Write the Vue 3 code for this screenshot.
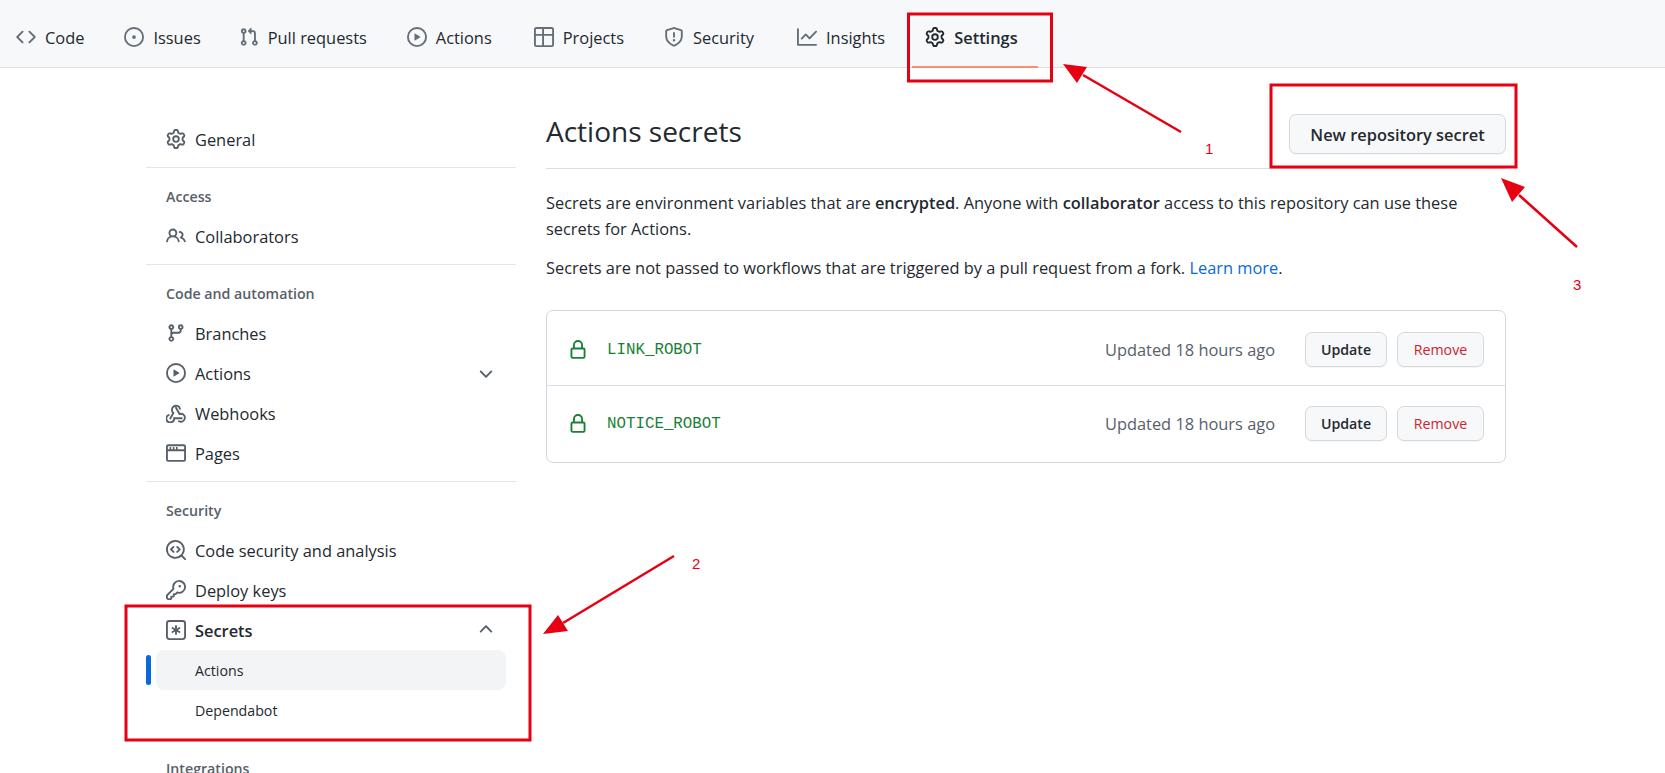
<script setup>
const icons = {
  code: 'M4.72 3.22a.75.75 0 011.06 1.06L2.06 8l3.72 3.72a.75.75 0 11-1.06 1.06L.47 8.53a.75.75 0 010-1.06l4.25-4.25zm6.56 0a.75.75 0 10-1.06 1.06L13.94 8l-3.72 3.72a.75.75 0 101.06 1.06l4.25-4.25a.75.75 0 000-1.06l-4.25-4.25z',
  issue: 'M8 9.5a1.5 1.5 0 100-3 1.5 1.5 0 000 3zM8 0a8 8 0 100 16A8 8 0 008 0zM1.5 8a6.5 6.5 0 1113 0 6.5 6.5 0 01-13 0z',
  pull: 'M7.177 3.073L9.573.677A.25.25 0 0110 .854v4.792a.25.25 0 01-.427.177L7.177 3.427a.25.25 0 010-.354zM3.75 2.5a.75.75 0 100 1.5.75.75 0 000-1.5zm-2.25.75a2.25 2.25 0 113 2.122v5.256a2.251 2.251 0 11-1.5 0V5.372A2.25 2.25 0 011.5 3.25zM11 2.5h-1V4h1a1 1 0 011 1v5.628a2.251 2.251 0 101.5 0V5A2.5 2.5 0 0011 2.5zm1 10.25a.75.75 0 111.5 0 .75.75 0 01-1.5 0zM3.75 12a.75.75 0 100 1.5.75.75 0 000-1.5z',
  play: 'M1.5 8a6.5 6.5 0 1113 0 6.5 6.5 0 01-13 0zM8 0a8 8 0 100 16A8 8 0 008 0zM6.379 5.227A.25.25 0 006 5.442v5.117a.25.25 0 00.379.214l4.264-2.559a.25.25 0 000-.428L6.379 5.227z',
  table: 'M0 1.75C0 .784.784 0 1.75 0h12.5C15.216 0 16 .784 16 1.75v12.5A1.75 1.75 0 0114.25 16H1.75A1.75 1.75 0 010 14.25V1.75zM1.5 1.5h5v4h-5zM8 1.5h6.5v4H8zM1.5 7h5v7.5h-5zM8 7h6.5v7.5H8z',
  shield: 'M7.467.133a1.75 1.75 0 011.066 0l5.25 1.68A1.75 1.75 0 0115 3.48V7c0 1.566-.32 3.182-1.303 4.682-.983 1.498-2.585 2.813-5.032 3.855a1.7 1.7 0 01-1.33 0c-2.447-1.042-4.049-2.357-5.032-3.855C1.32 10.182 1 8.566 1 7V3.48a1.75 1.75 0 011.217-1.667l5.25-1.68zm.61 1.429a.25.25 0 00-.153 0l-5.25 1.68a.25.25 0 00-.174.238V7c0 1.358.275 2.666 1.057 3.86.784 1.194 2.121 2.34 4.366 3.297a.2.2 0 00.154 0c2.245-.956 3.582-2.104 4.366-3.298C13.225 9.666 13.5 8.36 13.5 7V3.48a.25.25 0 00-.174-.237l-5.25-1.68zM9 10.5a1 1 0 11-2 0 1 1 0 012 0zm-.25-5.75a.75.75 0 10-1.5 0v3a.75.75 0 001.5 0v-3z',
  graph: 'M1.5 1.75a.75.75 0 00-1.5 0v12.5c0 .414.336.75.75.75h14.5a.75.75 0 000-1.5H1.5V1.75zm14.28 2.53a.75.75 0 00-1.06-1.06L10 7.94 7.53 5.47a.75.75 0 00-1.06 0L3.22 8.72a.75.75 0 001.06 1.06L7 7.06l2.47 2.47a.75.75 0 001.06 0l5.25-5.25z',
  gear: 'M7.429 1.525a6.593 6.593 0 011.142 0c.036.003.108.036.137.146l.289 1.105c.147.56.55.967.997 1.189.174.086.341.183.501.29.417.278.97.423 1.53.27l1.102-.303c.11-.03.175.016.195.046.219.31.41.641.573.989.014.031.022.11-.059.19l-.815.806c-.411.406-.562.957-.53 1.456a4.588 4.588 0 010 .582c-.032.499.119 1.05.53 1.456l.815.806c.08.08.073.159.059.19a6.494 6.494 0 01-.573.99c-.02.029-.086.074-.195.045l-1.103-.303c-.559-.153-1.112-.008-1.529.27-.16.107-.327.204-.5.29-.449.222-.851.628-.998 1.189l-.289 1.105c-.029.11-.101.143-.137.146a6.613 6.613 0 01-1.142 0c-.036-.003-.108-.037-.137-.146l-.289-1.105c-.147-.56-.55-.967-.997-1.189a4.502 4.502 0 01-.501-.29c-.417-.278-.97-.423-1.53-.27l-1.102.303c-.11.03-.175-.016-.195-.046a6.492 6.492 0 01-.573-.989c-.014-.031-.022-.11.059-.19l.815-.806c.411-.406.562-.957.53-1.456a4.587 4.587 0 010-.582c.032-.499-.119-1.05-.53-1.456l-.815-.806c-.08-.08-.073-.159-.059-.19a6.44 6.44 0 01.573-.99c.02-.029.086-.075.195-.045l1.103.303c.559.153 1.112.008 1.529-.27.16-.107.327-.204.5-.29.449-.222.851-.628.998-1.189l.289-1.105c.029-.11.101-.143.137-.146zM8 0c-.236 0-.47.01-.701.03-.743.065-1.29.615-1.458 1.261l-.29 1.106c-.017.066-.078.158-.211.224a5.994 5.994 0 00-.668.386c-.123.082-.233.09-.3.071L3.27 2.776c-.644-.177-1.392.02-1.82.63a7.977 7.977 0 00-.704 1.217c-.315.675-.111 1.422.363 1.891l.815.806c.05.048.098.147.088.294a6.084 6.084 0 000 .772c.01.147-.038.246-.088.294l-.815.806c-.474.469-.678 1.216-.363 1.891.2.428.436.835.704 1.218.428.609 1.176.806 1.82.63l1.103-.303c.066-.019.176-.011.299.071.213.143.436.272.668.386.133.066.194.158.212.224l.289 1.106c.169.646.715 1.196 1.458 1.26a8.094 8.094 0 001.402 0c.743-.064 1.29-.614 1.458-1.26l.29-1.106c.017-.066.078-.158.211-.224a5.98 5.98 0 00.668-.386c.123-.082.233-.09.3-.071l1.102.302c.644.177 1.392-.02 1.82-.63.268-.382.505-.789.704-1.217.315-.675.111-1.422-.364-1.891l-.814-.806c-.05-.048-.098-.147-.088-.294a6.1 6.1 0 000-.772c-.01-.147.039-.246.088-.294l.814-.806c.475-.469.679-1.216.364-1.891a7.992 7.992 0 00-.704-1.218c-.428-.609-1.176-.806-1.82-.63l-1.103.303c-.066.019-.176.011-.299-.071a5.991 5.991 0 00-.668-.386c-.133-.066-.194-.158-.212-.224L10.16 1.29C9.99.645 9.444.095 8.701.031A8.094 8.094 0 008 0zm1.5 8a1.5 1.5 0 11-3 0 1.5 1.5 0 013 0zM11 8a3 3 0 11-6 0 3 3 0 016 0z',
  people: 'M5.5 3.5a2 2 0 100 4 2 2 0 000-4zM2 5.5a3.5 3.5 0 115.898 2.549 5.507 5.507 0 013.034 4.084.75.75 0 11-1.482.235 4.001 4.001 0 00-7.9 0 .75.75 0 01-1.482-.236A5.507 5.507 0 013.102 8.05 3.49 3.49 0 012 5.5zM11 4a.75.75 0 100 1.5 1.5 1.5 0 01.666 2.844.75.75 0 00-.416.672v.352a.75.75 0 00.574.73c1.2.289 2.162 1.2 2.522 2.372a.75.75 0 101.434-.44 5.01 5.01 0 00-2.56-3.012A3 3 0 0011 4z',
  branch: 'M11.75 2.5a.75.75 0 100 1.5.75.75 0 000-1.5zm-2.25.75a2.25 2.25 0 113 2.122V6A2.5 2.5 0 0110 8.5H6a1 1 0 00-1 1v1.128a2.251 2.251 0 11-1.5 0V5.372a2.25 2.25 0 111.5 0v1.836A2.492 2.492 0 016 7h4a1 1 0 001-1v-.628A2.25 2.25 0 019.5 3.25zM4.25 12a.75.75 0 100 1.5.75.75 0 000-1.5zM3.5 3.25a.75.75 0 111.5 0 .75.75 0 01-1.5 0z',
  browser: 'M0 2.75C0 1.784.784 1 1.75 1h12.5c.966 0 1.75.784 1.75 1.75v10.5A1.75 1.75 0 0114.25 15H1.75A1.75 1.75 0 010 13.25V2.75zM1.5 6.5v6.75c0 .138.112.25.25.25h12.5a.25.25 0 00.25-.25V6.5zM1.5 5h1.3V3.2h1.3V5h1.3V3.2h1.3V5h1.3V3.2h1.3V5h5.2V2.75a.25.25 0 00-.25-.25H1.75a.25.25 0 00-.25.25z',
  codescan: 'M8.47 4.97a.75.75 0 000 1.06L9.94 7.5 8.47 8.97a.75.75 0 101.06 1.06l2-2a.75.75 0 000-1.06l-2-2a.75.75 0 00-1.06 0zM6.53 6.03a.75.75 0 00-1.06-1.06l-2 2a.75.75 0 000 1.06l2 2a.75.75 0 101.06-1.06L5.06 7.5l1.47-1.47zM12.246 13.307a7.5 7.5 0 111.06-1.06l2.474 2.473a.75.75 0 11-1.06 1.06l-2.474-2.473zM1.5 7.5a6 6 0 1110.386 4.094.75.75 0 00-.292.293A6 6 0 011.5 7.5z',
  key: 'M6.5 5.5a4 4 0 112.731 3.795.75.75 0 00-.768.18L7.44 10.5H6.25a.75.75 0 00-.75.75v1.19l-.06.06H4.25a.75.75 0 00-.75.75v1.19l-.06.06H1.75a.25.25 0 01-.25-.25v-1.69l5.024-5.023a.75.75 0 00.181-.768A3.995 3.995 0 016.5 5.5zm4-5.5a5.5 5.5 0 00-5.348 6.788L.22 11.72a.75.75 0 00-.22.53v2C0 15.216.784 16 1.75 16h2a.75.75 0 00.53-.22l.5-.5a.75.75 0 00.22-.53V14h.75a.75.75 0 00.53-.22l.5-.5a.75.75 0 00.22-.53V12h.75a.75.75 0 00.53-.22l.932-.932A5.5 5.5 0 1010.5 0zm.5 6a1 1 0 100-2 1 1 0 000 2z',
  asterisk: 'M0 2.75A2.75 2.75 0 012.75 0h10.5A2.75 2.75 0 0116 2.75v10.5A2.75 2.75 0 0113.25 16H2.75A2.75 2.75 0 010 13.25V2.75zm2.75-1.25c-.69 0-1.25.56-1.25 1.25v10.5c0 .69.56 1.25 1.25 1.25h10.5c.69 0 1.25-.56 1.25-1.25V2.75c0-.69-.56-1.25-1.25-1.25H2.75zM8 4a.75.75 0 01.75.75V6.7l1.69-.975a.75.75 0 01.75 1.3L9.5 8l1.69.976a.75.75 0 01-.75 1.298L8.75 9.3v1.951a.75.75 0 01-1.5 0V9.299l-1.69.976a.75.75 0 01-.75-1.3L6.5 8l-1.69-.975a.75.75 0 01.75-1.3l1.69.976V4.75A.75.75 0 018 4z',
  lock: 'M4 4v2h-.25A1.75 1.75 0 002 7.75v5.5c0 .966.784 1.75 1.75 1.75h8.5A1.75 1.75 0 0014 13.25v-5.5A1.75 1.75 0 0012.25 6H12V4a4 4 0 10-8 0zm6.5 2V4a2.5 2.5 0 00-5 0v2h5zM12 7.5h.25a.25.25 0 01.25.25v5.5a.25.25 0 01-.25.25h-8.5a.25.25 0 01-.25-.25v-5.5a.25.25 0 01.25-.25H12z',
  down: 'M12.78 6.22a.75.75 0 010 1.06l-4.25 4.25a.75.75 0 01-1.06 0L3.22 7.28a.75.75 0 011.06-1.06L8 9.94l3.72-3.72a.75.75 0 011.06 0z',
  up: 'M3.22 9.78a.75.75 0 010-1.06l4.25-4.25a.75.75 0 011.06 0l4.25 4.25a.75.75 0 01-1.06 1.06L8 6.06 4.28 9.78a.75.75 0 01-1.06 0z',
}

const tabs = [
  { label: 'Code', icon: 'code' },
  { label: 'Issues', icon: 'issue' },
  { label: 'Pull requests', icon: 'pull' },
  { label: 'Actions', icon: 'play' },
  { label: 'Projects', icon: 'table' },
  { label: 'Security', icon: 'shield' },
  { label: 'Insights', icon: 'graph' },
  { label: 'Settings', icon: 'gear', active: true },
]

const secrets = ['LINK_ROBOT', 'NOTICE_ROBOT']
</script>

<template>
  <div class="page">
    <nav class="tabs">
      <a v-for="tab in tabs" :key="tab.label" class="tab" :class="{ active: tab.active }">
        <svg class="icon" viewBox="0 0 16 16"><path :d="icons[tab.icon]" /></svg>
        <span>{{ tab.label }}</span>
      </a>
    </nav>

    <div class="layout">
      <aside class="side">
        <a class="row"><svg class="icon" viewBox="0 0 16 16"><path :d="icons.gear" /></svg>General</a>
        <hr />
        <div class="label">Access</div>
        <a class="row"><svg class="icon" viewBox="0 0 16 16"><path :d="icons.people" /></svg>Collaborators</a>
        <hr />
        <div class="label">Code and automation</div>
        <a class="row"><svg class="icon" viewBox="0 0 16 16"><path :d="icons.branch" /></svg>Branches</a>
        <a class="row">
          <svg class="icon" viewBox="0 0 16 16"><path :d="icons.play" /></svg>Actions
          <svg class="chev" viewBox="0 0 16 16"><path :d="icons.down" /></svg>
        </a>
        <a class="row">
          <svg class="icon" viewBox="0 0 16 16">
            <g class="hook">
              <path d="M3.4 12.4 L5.9 8 A3.3 3.3 0 1 1 11.2 4.6" />
              <path d="M8 3.8 L10.8 8.8 A3.2 3.2 0 1 1 10.4 14.6" />
              <path d="M12.6 12.2 H6.5 A3.1 3.1 0 1 1 2.2 9.6" />
            </g>
          </svg>Webhooks
        </a>
        <a class="row"><svg class="icon" viewBox="0 0 16 16"><path :d="icons.browser" /></svg>Pages</a>
        <hr />
        <div class="label">Security</div>
        <a class="row"><svg class="icon" viewBox="0 0 16 16"><path :d="icons.codescan" /></svg>Code security and analysis</a>
        <a class="row"><svg class="icon" viewBox="0 0 16 16"><path :d="icons.key" /></svg>Deploy keys</a>
        <a class="row strong">
          <svg class="icon" viewBox="0 0 16 16"><path :d="icons.asterisk" /></svg>Secrets
          <svg class="chev" viewBox="0 0 16 16"><path :d="icons.up" /></svg>
        </a>
        <a class="sub current">Actions</a>
        <a class="sub">Dependabot</a>
        <div class="label last">Integrations</div>
      </aside>

      <main class="main">
        <header class="head">
          <h2>Actions secrets</h2>
          <button class="btn big">New repository secret</button>
        </header>
        <p class="first">
          Secrets are environment variables that are <b>encrypted</b>. Anyone with <b>collaborator</b> access to this repository can use these secrets for Actions.
        </p>
        <p class="second">
          Secrets are not passed to workflows that are triggered by a pull request from a fork. <a class="link">Learn more</a>.
        </p>
        <div class="box">
          <div v-for="name in secrets" :key="name" class="secret">
            <svg class="lock" viewBox="0 0 16 16"><path :d="icons.lock" /></svg>
            <code>{{ name }}</code>
            <span class="when">Updated 18 hours ago</span>
            <button class="btn small">Update</button>
            <button class="btn small danger">Remove</button>
          </div>
        </div>
      </main>
    </div>

    <!-- red annotations drawn on top of the screenshot -->
    <svg class="marks" width="1665" height="773" viewBox="0 0 1665 773">
      <g fill="none" stroke="#e60012" stroke-width="3">
        <rect x="908.5" y="14" width="143" height="67" />
        <rect x="1271" y="85" width="245" height="82" />
        <rect x="126" y="606" width="404" height="134" />
        <path d="M1181 132 L1083 75" stroke-width="2.5" />
        <path d="M1577 247 L1519 195" stroke-width="2.5" />
        <path d="M674 556 L563 623" stroke-width="2.5" />
      </g>
      <g fill="#e60012">
        <path d="M1063 64 L1087 67 L1077 83 Z" />
        <path d="M1501 178 L1525 187 L1512 202 Z" />
        <path d="M543 634 L558 615 L568 631 Z" />
      </g>
      <g class="num" fill="#e60012">
        <text x="1205" y="154">1</text>
        <text x="692" y="569">2</text>
        <text x="1573" y="290">3</text>
      </g>
    </svg>
  </div>
</template>

<style>
html, body {
  margin: 0;
  height: 773px;
  overflow: hidden;
  background: #fff;
}
</style>

<style scoped>
.page {
  position: relative;
  height: 773px;
  overflow: hidden;
  font-family: "Open Sans", "Liberation Sans", sans-serif;
  font-size: 16.4px;
  color: #24292f;
}

.tabs {
  display: flex;
  height: 67px;
  padding-left: 16px;
  gap: 40px;
  background: #f6f8fa;
  border-bottom: 1px solid #d8dee4;
}

.tab {
  position: relative;
  display: flex;
  align-items: center;
  gap: 9px;
  padding-top: 7px;
}

.tab:nth-child(3) {
  margin-left: -2px;
}

.tab:nth-child(5) {
  margin-left: 2px;
}

.tab:nth-child(7) {
  margin-left: 3px;
}

.tab .icon {
  fill: #656d76;
  margin-top: -1px;
}

.tab.active {
  font-weight: 600;
}

.tab.active .icon {
  fill: #24292f;
}

.tab.active::after {
  content: "";
  position: absolute;
  left: -13px;
  right: -20px;
  bottom: -1px;
  height: 2px;
  background: #fd8c73;
}

.icon {
  width: 20px;
  height: 20px;
  flex: none;
  fill: #57606a;
  fill-rule: evenodd;
}

.layout {
  display: flex;
  padding: 51px 0 0 146px;
}

.side {
  width: 370px;
  flex: none;
}

.row {
  display: flex;
  align-items: center;
  gap: 9px;
  height: 40px;
  padding-left: 20px;
}

.row.strong {
  font-weight: 600;
}

.chev {
  width: 20px;
  height: 20px;
  margin-left: auto;
  margin-right: 20px;
  fill: #57606a;
}

.hook {
  fill: none;
  stroke: #57606a;
  stroke-width: 1.5;
  stroke-linecap: round;
}

hr {
  margin: 8px 0 0;
  border: 0;
  height: 1px;
  background: #e2e6ea;
}

.label {
  height: 20px;
  line-height: 20px;
  padding: 19px 0 9px 20px;
  font-size: 14.2px;
  font-weight: 600;
  color: #57606a;
}

.label.last {
  padding-top: 29px;
}

.sub {
  position: relative;
  display: flex;
  align-items: center;
  height: 40px;
  margin-left: 10px;
  margin-right: 10px;
  padding-left: 39px;
  border-radius: 8px;
  font-size: 14.2px;
}

.sub.current {
  background: #f3f4f6;
}

.sub.current::before {
  content: "";
  position: absolute;
  left: -10px;
  top: 5px;
  width: 5px;
  height: 30px;
  border-radius: 5px;
  background: #0969da;
}

.main {
  width: 960px;
  margin-left: 30px;
  margin-top: -6px;
}

.head {
  display: flex;
  align-items: center;
  justify-content: space-between;
  height: 55px;
  border-bottom: 1px solid #d8dee4;
}

h2 {
  margin: 0 0 20px;
  font-size: 28px;
  font-weight: 400;
}

.btn {
  font-family: inherit;
  background: #f6f8fa;
  border: 1px solid #d5d9de;
  border-radius: 7px;
  color: #24292f;
  font-weight: 600;
  box-shadow: 0 1px 0 rgba(27, 31, 36, 0.04);
}

.btn.big {
  width: 217px;
  height: 40px;
  margin-bottom: 13px;
  font-size: 16.4px;
  padding: 0;
}

.btn.small {
  height: 35px;
  width: 82px;
  padding: 0;
  font-size: 14.2px;
}

.btn.danger {
  width: 87px;
  margin-left: 10px;
  color: #cf222e;
  font-weight: 500;
}

p {
  margin: 0;
  line-height: 26px;
}

.first {
  margin-top: 21px;
}

.second {
  margin-top: 13px;
}

b {
  font-weight: 600;
}

.link {
  color: #0969da;
}

.box {
  margin-top: 29px;
  border: 1px solid #d0d7de;
  border-radius: 7px;
}

.secret {
  display: flex;
  align-items: center;
  padding: 21px 21px 18px 21px;
}

.secret + .secret {
  border-top: 1px solid #d8dee4;
  padding-top: 20px;
  padding-bottom: 21px;
}

.lock {
  width: 20px;
  height: 20px;
  fill: #1a7f37;
  fill-rule: evenodd;
  margin-right: 19px;
}

code {
  font-family: "Liberation Mono", monospace;
  font-size: 15.8px;
  color: #1a7f37;
}

.when {
  margin-left: auto;
  margin-right: 30px;
  color: #57606a;
}

.marks {
  position: absolute;
  left: 0;
  top: 0;
  pointer-events: none;
}

.num {
  font-family: "Liberation Sans", sans-serif;
  font-size: 15px;
}
</style>
